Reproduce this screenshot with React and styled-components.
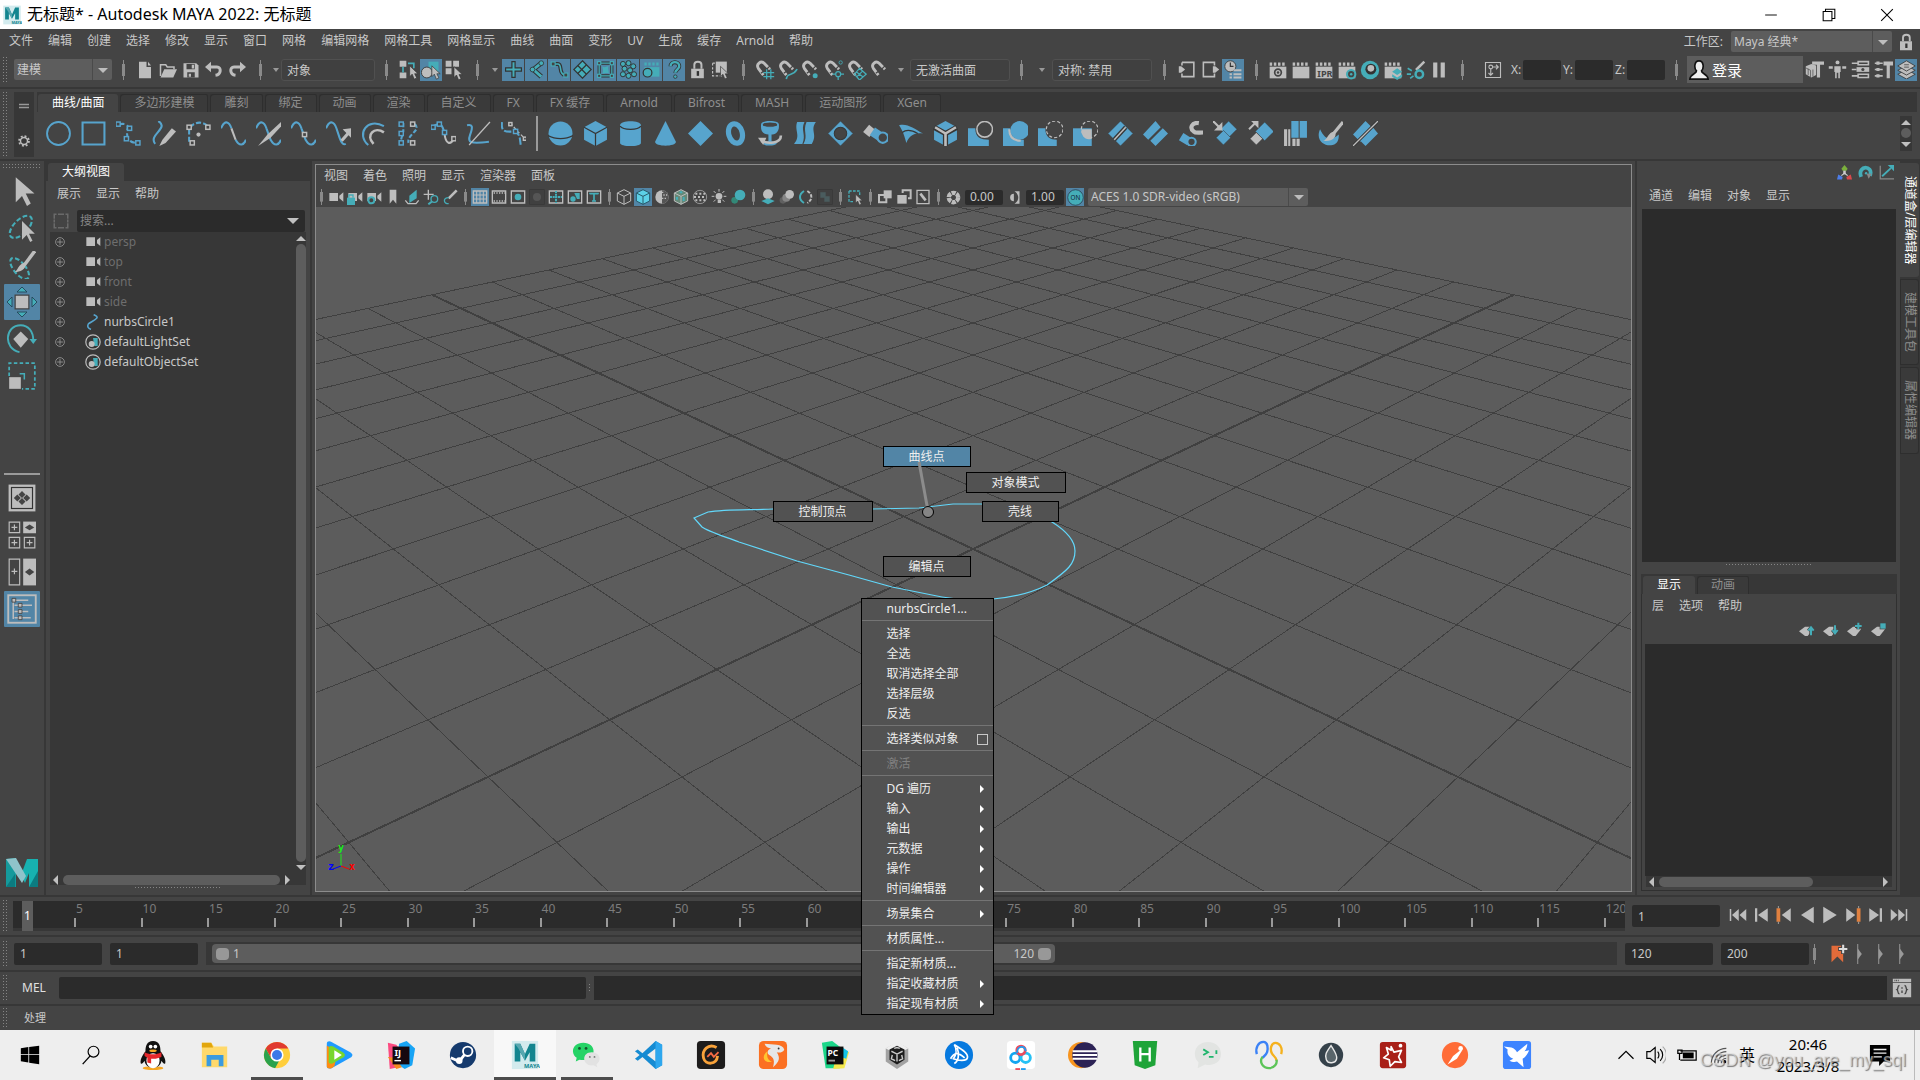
import styled, { createGlobalStyle, css } from "styled-components";

const LIGHT = "#bdbdbd";
const BLUE = "#57a4cd";
const TEAL = "#45adb8";
const DARK = "#373737";

/* ---------- icon drawing helpers ---------- */

const Svg = ({ size = 18, box = 24, children }) => (
  <svg
    width={size}
    height={size}
    viewBox={`0 0 ${box} ${box}`}
    fill="none"
    aria-hidden="true"
  >
    {children}
  </svg>
);

const Line = ({ d, c = BLUE, w = 2, dash }) => (
  <path d={d} stroke={c} strokeWidth={w} strokeDasharray={dash} />
);

const Fill = ({ d, c = BLUE }) => <path d={d} fill={c} />;

const Cv = ({ at, c = BLUE, s = 4 }) =>
  at.map(([x, y]) => (
    <rect
      key={`${x}-${y}`}
      x={x - s / 2}
      y={y - s / 2}
      width={s}
      height={s}
      fill="#444"
      stroke={c}
      strokeWidth="1.4"
    />
  ));

const Cursor = ({ x = 10, y = 8 }) => (
  <path
    transform={`translate(${x} ${y})`}
    d="M0 0v13l3-3 2.500 6 3-1.500-2.500-5h4z"
    fill={LIGHT}
    stroke="#333"
    strokeWidth=".8"
  />
);

const Clap = () => (
  <>
    <rect x="2" y="8" width="20" height="14" fill={LIGHT} />
    <path d="M2 5h20" stroke={LIGHT} strokeWidth="4" strokeDasharray="3 2" />
  </>
);

const Magnet = ({ children }) => (
  <>
    <path
      d="M10 18L4 10C1 5 7 0 11 4l7 7"
      stroke={LIGHT}
      strokeWidth="3.500"
    />
    <path d="M7 16l4-3M14 11l4-4" stroke="#444" strokeWidth="1.500" />
    {children}
  </>
);

/* ---------- data ---------- */

const mainMenus = [
  "文件", "编辑", "创建", "选择", "修改", "显示", "窗口", "网格", "编辑网格",
  "网格工具", "网格显示", "曲线", "曲面", "变形", "UV", "生成", "缓存",
  "Arnold", "帮助",
];

const shelfTabs = [
  "曲线/曲面", "多边形建模", "雕刻", "绑定", "动画", "渲染", "自定义", "FX",
  "FX 缓存", "Arnold", "Bifrost", "MASH", "运动图形", "XGen",
];

const fileIcons = {
  新建: (
    <>
      <Fill d="M4 1h10v7h6v15H4z" c={LIGHT} />
      <Fill d="M16 1l4 5h-4z" c={LIGHT} />
    </>
  ),
  打开: (
    <>
      <Line d="M2 20V5h7l2 3h9v3" c={LIGHT} />
      <Fill d="M7 11h17l-5 11H2z" c={LIGHT} />
    </>
  ),
  保存: (
    <>
      <Fill d="M2 3h17l3 3v16H2z" c={LIGHT} />
      <Fill d="M6 4h11v7H6zM7 15h10v7H7z" c="#444" />
      <Fill d="M13 5h3v5h-3zM9 17h3v4H9z" c={LIGHT} />
    </>
  ),
  撤销: (
    <>
      <Line d="M6 8h10c6 0 6 10-2 11" c={LIGHT} w={4} />
      <Fill d="M0 8l8-7v14z" c={LIGHT} />
    </>
  ),
  重做: (
    <>
      <Line d="M18 8H8c-6 0-6 10 2 11" c={LIGHT} w={4} />
      <Fill d="M24 8l-8-7v14z" c={LIGHT} />
    </>
  ),
};

const pickIcons = {
  按层级选择: (
    <>
      <Fill d="M2 1h8v7H2zM2 15h8v7H2z" c={LIGHT} />
      <Line d="M6 8v7M12 4h7v6" c={TEAL} />
      <Cursor x={14} y={7} />
    </>
  ),
  按对象选择: (
    <>
      <Fill d="M9 2h12v12H9z" c={TEAL} />
      <circle cx="7" cy="15" r="6.500" fill={LIGHT} stroke="#333" />
      <Cursor x={13} y={7} />
    </>
  ),
  按组件选择: (
    <>
      <Fill d="M2 1h7v7H2zM11 1h7v7h-7zM2 10h7v7H2z" c={LIGHT} />
      <Cursor x={12} y={8} />
    </>
  ),
};

const maskIcons = {
  控制柄: (
    <path d="M10 2h4v8h8v4h-8v8h-4v-8H2v-4h8z" fill={TEAL} stroke="#333" strokeWidth="1.500" />
  ),
  关节: (
    <>
      <path d="M18 4L8 12l10 9" stroke="#333" strokeWidth="6" />
      <path d="M18 4L8 12l10 9" stroke={TEAL} strokeWidth="3.500" />
      <circle cx="18" cy="4" r="3" fill={TEAL} stroke="#333" />
      <circle cx="7" cy="12" r="3" fill={TEAL} stroke="#333" />
    </>
  ),
  曲线: (
    <>
      <Line d="M5 5h5c6 0 0 13 9 14" c="#333" w={5} />
      <Line d="M5 5h5c6 0 0 13 9 14" c={TEAL} />
      <Cv at={[[4, 5], [20, 19]]} c={TEAL} s={5} />
    </>
  ),
  曲面: (
    <>
      <path d="M12 1l11 11-11 11L1 12z" fill={TEAL} stroke="#333" strokeWidth="1.500" />
      <Line d="M6 7l11 11M17 6L6 17" c="#333" w={1.5} />
    </>
  ),
  变形: (
    <>
      <Line d="M4 4h16v16H4z" c="#333" w={4} />
      <Line d="M4 4h16v16H4z" c={TEAL} w={1.6} />
      <Fill d="M8 8c4 3 5-1 8 0-2 4 1 6 0 9-4-2-6 1-8 0 2-4 0-6 0-9z" c={TEAL} />
      <Cv at={[[4, 4], [20, 4], [4, 20], [20, 20]]} c={TEAL} />
    </>
  ),
  动力学: [[5, 5], [12, 4], [18, 8], [7, 11], [14, 13], [5, 18], [12, 20], [19, 18]].map(
    ([x, y]) => (
      <circle key={`${x}${y}`} cx={x} cy={y} r="3.200" fill={TEAL} stroke="#333" strokeWidth="1.200" />
    )
  ),
  渲染: (
    <>
      <path d="M3 5h19" stroke={TEAL} strokeWidth="4" strokeDasharray="3 2" />
      <Fill d="M3 9h19v12H3z" c={TEAL} />
      <circle cx="7" cy="16" r="5.500" fill={TEAL} stroke="#333" strokeWidth="1.500" />
    </>
  ),
  杂项: (
    <>
      <path d="M7 8c0-7 11-7 11 0 0 4-5 4-5 8" stroke="#333" strokeWidth="5" />
      <path d="M7 8c0-7 11-7 11 0 0 4-5 4-5 8" stroke={TEAL} strokeWidth="3" />
      <circle cx="13" cy="21" r="2.200" fill={TEAL} stroke="#333" />
    </>
  ),
};

const lockIcons = {
  锁定选择: (
    <>
      <Line d="M8 11V6c0-5 9-5 9 0v5" c={LIGHT} w={2.5} />
      <Fill d="M4 11h16v12H4z" c={LIGHT} />
      <Fill d="M11 14h3v6h-3z" c="#333" />
    </>
  ),
  高亮选择: (
    <>
      <Line d="M2 4h14M2 4v16h12" c={LIGHT} w={1.5} dash="3 2" />
      <Fill d="M6 2h14v14H6z" c={LIGHT} />
      <Cursor x={12} y={8} />
    </>
  ),
};

const snapIcons = {
  捕捉到栅格: <Magnet><Line d="M10 15h13M10 20h13M14 11v12M19 11v12" c={TEAL} w={1.5} /></Magnet>,
  捕捉到曲线: <Magnet><Line d="M10 23c1-9 7-2 13-12" c={TEAL} /></Magnet>,
  捕捉到点: <Magnet><circle cx="17" cy="19" r="3" fill={TEAL} /></Magnet>,
  捕捉到投影中心: (
    <Magnet>
      <circle cx="20" cy="3" r="2" stroke={TEAL} />
      <circle cx="17" cy="17" r="3" stroke={TEAL} strokeWidth="1.500" />
      <Line d="M17 20v4M20 17h4M10 17h4" c={TEAL} w={1.5} />
    </Magnet>
  ),
  捕捉到视图平面: <Magnet><Line d="M15 10l8 7-8 7-6-7zM11 14l8 6M19 13l-7 7" c={TEAL} w={1.5} /></Magnet>,
  激活选定对象: <Magnet />,
};

const historyIcons = {
  输入: (
    <>
      <Line d="M5 3h15v18H5v-4M5 3v4" c={LIGHT} />
      <Fill d="M1 8h3l5 4-5 4H1z" c={LIGHT} />
    </>
  ),
  输出: (
    <>
      <Line d="M17 7V3H3v18h14v-4" c={LIGHT} />
      <Fill d="M15 8h3l5 4-5 4h-3z" c={LIGHT} />
    </>
  ),
  构建历史: (
    <>
      <circle cx="8" cy="8" r="7" fill={LIGHT} stroke="#333" />
      <Line d="M8 3v5h4" c="#333" w={1.5} />
      <path d="M12 13h10M12 18h10M12 22h10M7 18h3M7 22h3" stroke={LIGHT} strokeWidth="2.500" />
    </>
  ),
};

const renderIcons = {
  打开渲染视图: <><Clap /><circle cx="12" cy="15" r="4" stroke="#444" strokeWidth="2" /><circle cx="12" cy="15" r="1.500" fill="#444" /></>,
  渲染当前帧: <Clap />,
  IPR渲染: <><Clap /><text x="4" y="20" fontSize="11" fontWeight="700" fill="#444">IPR</text></>,
  渲染设置: <><Clap /><circle cx="17" cy="17" r="5" fill="#444" stroke={TEAL} strokeWidth="2.500" /><circle cx="17" cy="17" r="1.500" fill={TEAL} /></>,
  材质编辑器: <><circle cx="12" cy="12" r="11" fill={TEAL} /><circle cx="13" cy="11" r="6.500" fill="#333" /><circle cx="13" cy="10" r="4" fill={LIGHT} /></>,
  渲染设置编辑: <><Clap /><Fill d="M17 10l6 4-6 4-6-4zM11 17l6 4 6-4v3l-6 4-6-4z" c={TEAL} /></>,
  灯光编辑器: (
    <>
      <Line d="M22 2L12 12" c={LIGHT} w={3} />
      <Line d="M2 10l5 3M1 17h5M5 22l4-3" c={TEAL} />
      <circle cx="16" cy="17" r="4.500" stroke={TEAL} strokeWidth="3" />
    </>
  ),
  暂停: <Fill d="M5 3h5v18H5zM14 3h5v18h-5z" c={LIGHT} />,
};

const sidebarIcons = {
  建模工具包: (
    <>
      <Fill d="M1 8l7-3 6 2v12l-6 3-7-4z" c={LIGHT} />
      <Line d="M1 10l6 3v9M4 11v8M10 12v9" c="#555" w={1} />
      <Fill d="M9 2h15v4h-5v16h-4V6H9z" c={LIGHT} />
    </>
  ),
  人形角色: (
    <>
      <circle cx="12" cy="3" r="2.500" fill={LIGHT} />
      <Fill d="M8 8h8v7h-1v8h-2v-7h-2v7H9v-8H8zM1 8h5v3H1zM18 8h5v3h-5z" c={LIGHT} />
    </>
  ),
  属性编辑器: (
    <>
      <Line d="M1 4h8M1 20h8M1 12h6" c={LIGHT} />
      <Line d="M9 2h13v4H9zM9 18h13v4H9z" c={LIGHT} />
      <Fill d="M7 9h16v6H7z" c={LIGHT} />
      <circle cx="15" cy="12" r="2" fill="#444" />
    </>
  ),
  工具设置: (
    <>
      <Line d="M1 4h10M1 12h10M1 20h10" c={LIGHT} />
      <Fill d="M3 2h4v4H3zM3 10h4v4H3zM3 18h4v4H3zM12 2h12v5h-4v16h-4V7h-4z" c={LIGHT} />
    </>
  ),
  通道盒: (
    <>
      <path d="M12 12l11 6-11 6-11-6z" fill={LIGHT} stroke="#333" />
      <path d="M12 7l11 6-11 6-11-6z" fill={LIGHT} stroke="#333" />
      <path d="M12 1l11 6.500L12 14 1 7.500z" fill={LIGHT} stroke="#333" />
      <path d="M9 6h6M9 9h6" stroke="#444" />
    </>
  ),
};

const shelfCurveIcons = [
  <circle key="a" cx="12" cy="12" r="11" stroke={BLUE} strokeWidth="1.800" />,
  <Line key="a" d="M1.500 1.500h21v21h-21z" />,
  <><Line d="M3 3c8-1 9 1 8 5s-1 13 9 13" dash="5 3" /><Cv at={[[2, 3], [13, 7], [10, 17], [21, 21]]} /></>,
  <><Line d="M7 0c11 7-10 13-3 22" /><Fill d="M20 7l4 3-10 11-6 3 3-6z" c={LIGHT} /></>,
  <><path d="M3 20V8C7 0 16 0 21 5" stroke={BLUE} strokeWidth="2" strokeDasharray="5 2" /><Cv at={[[3, 6], [21, 6], [6, 21]]} c={LIGHT} /><circle cx="12" cy="13" r="2" fill={LIGHT} /></>,
  <><Line d="M0 7C4-2 8 1 10 7M14 18c4 7 8 5 10 0" /><Line d="M10 7l4 11" c={LIGHT} /></>,
  <><Line d="M0 7C4-2 8 1 10 7l4 11c4 7 8 5 10 0" /><Fill d="M24 1L11 13l-9 11 12-8L26 3z" c={LIGHT} /></>,
  <><Line d="M0 7C4-2 8 1 10 7l4 11c4 7 8 5 10 0" /><Cv at={[[13, 13]]} c={LIGHT} /></>,
  <><Line d="M0 7C4-2 8 1 10 7l3 9c2 6 4 7 6 6" /><Line d="M15 19l7-8" c={LIGHT} w={3} /><Fill d="M24 7v9l-8-8z" c={LIGHT} /></>,
  <><Line d="M7 23C-5 13 6-4 22 5" /><Line d="M12 22C4 13 13 5 22 11" c={LIGHT} w={2.5} /></>,
  <><Line d="M7 2v8l-3 11M18 3c7 6-8 10-6 18" dash="4 2" /><Cv at={[[5, 3], [5, 12], [5, 21]]} /><Cv at={[[16, 3], [16, 21]]} c={LIGHT} /></>,
  <><Line d="M2 5c7-4 9-2 11 7" /><Line d="M13 12c1 11 6 11 9 5" c={LIGHT} /><Cv at={[[2, 6], [8, 3], [13, 11]]} /><Cv at={[[22, 17]]} c={LIGHT} /></>,
  <><Line d="M1 4c5-1 6 1 3 9s0 9 18 7" /><Line d="M23 1L3 23" c={LIGHT} w={1.2} /></>,
  <><Line d="M1 1c-1 8 1 10 12 9 6 2 5 9 6 13" dash="7 2" /><Line d="M9 2l7 8 7 7" c={LIGHT} w={1.2} dash="3 2" /><Cv at={[[14, 10]]} /><Cv at={[[9, 3], [23, 17]]} c={LIGHT} s={3} /></>,
];

const Diamond = ({ x = 12, y = 12, r = 10, c = BLUE }) => (
  <path d={`M${x} ${y - r}l${r} ${r}-${r} ${r}-${r}-${r}z`} fill={c} stroke={DARK} strokeWidth=".5" />
);

const shelfSurfaceIcons = [
  <><circle cx="12" cy="12" r="11.500" fill={BLUE} /><Line d="M0 14c7 4 17 4 24 0" c={DARK} w={1.2} /></>,
  <><Fill d="M12 0l11 6v12l-11 6-11-6V6z" /><Line d="M1 6l11 6 11-6M12 12v12" c={DARK} w={1.2} /></>,
  <><Fill d="M2 4c0-5 20-5 20 0v17c0 4-20 4-20 0z" /><Line d="M2 5c3 4 17 4 20 0" c={DARK} w={1.2} /></>,
  <Fill key="a" d="M12 0l10 20c0 5-20 5-20 0z" />,
  <Fill key="a" d="M12 0l12 12-12 12L0 12z" />,
  <g key="a" transform="rotate(-15 12 12)"><ellipse cx="12" cy="12" rx="6.500" ry="9.500" stroke={BLUE} strokeWidth="5" /></g>,
  <><Fill d="M3 3c0-4 17-4 17 0 1 8-4 10-7 10v7h-3v-7C6 13 2 11 3 3z" /><ellipse cx="11.500" cy="3.500" rx="7.500" ry="2.500" fill="#444" stroke={BLUE} /><Fill d="M5 21c3-2 10-2 13 0 0 3-13 4-13 0z" /><Line d="M22 14c0 8-13 8-19 5" c={LIGHT} w={2.5} /><Fill d="M0 16l8 0-3 7z" c={LIGHT} /></>,
  <><Fill d="M4 1h7c-4 8 2 12-2 21H1C8 14 1 9 4 1z" /><Fill d="M13 1h9c-6 8 2 12-4 21h-8c5-8-1-12 3-21z" /></>,
  <><Diamond r={12} /><circle cx="12" cy="12" r="6" fill="#444" stroke={DARK} /></>,
  <><Line d="M3 7l6 5" c={LIGHT} w={9} /><Line d="M9 10l9 6" w={9} /><circle cx="19" cy="16" r="5" fill="#444" stroke={BLUE} strokeWidth="2" /></>,
  <><Fill d="M1 4c8-2 14 3 23 8-7-1-13 1-16 9-2-7-3-11-7-17z" /><Line d="M4 11C9 7 14 9 19 12" c={DARK} w={1.2} /></>,
  <><Fill d="M12 0l11 6v12l-11 6-11-6V6z" /><Line d="M1 6l11 6 11-6M12 12v12" c={DARK} w={5} /><Line d="M2 6l10 6 10-6M12 12v12" c={LIGHT} w={2.5} /></>,
  <><Fill d="M0 7h7c0 9 5 11 13 11v6H0z" /><circle cx="16" cy="8" r="7.500" stroke={LIGHT} strokeWidth="1.500" /></>,
  <><Fill d="M0 7h7c0 9 5 11 13 11v6H0z" /><circle cx="16" cy="9" r="9" fill={BLUE} /><Line d="M6 8c0 8 5 11 11 11" c={LIGHT} /></>,
  <><Fill d="M0 7h7c0 9 5 11 11 11v6H0z" /><circle cx="16" cy="8" r="8" stroke={LIGHT} strokeWidth="1.200" strokeDasharray="3 2" /></>,
  <><Fill d="M0 7h18v17H0z" /><Fill d="M8 8h10v9C12 19 8 15 8 8z" c={LIGHT} /><circle cx="16" cy="8" r="8" stroke={LIGHT} strokeWidth="1.200" strokeDasharray="3 2" /></>,
  <><Diamond r={12} /><Line d="M6 18L17 6" c={DARK} w={4} /><Line d="M6 18L17 6" c={LIGHT} w={1.5} /></>,
  <><Fill d="M12 0l5 6L5 18l-5-5zM19 7l5 5-12 12-5-5z" /></>,
  <><Line d="M3 15l8 5" w={8} /><circle cx="13" cy="20" r="4" fill="#444" stroke={BLUE} strokeWidth="2" /><path d="M20 2c-7-1-9 5-5 8 2 2 5 1 9 1" stroke={LIGHT} strokeWidth="4" /></>,
  <><Diamond x={15} y={8} r={8} /><Diamond x={10} y={16} r={7} /><Line d="M0 0l6 6" c={LIGHT} /><Fill d="M9 1v8H1z" c={LIGHT} /></>,
  <><Diamond x={16} y={10} r={9} /><Diamond x={8} y={17} r={6} c={LIGHT} /><Line d="M1 8l6-6" c={LIGHT} /><Fill d="M3 0h7v7z" c={LIGHT} /></>,
  <><Fill d="M8 0h7v16H8zM16 0h7v16h-7z" /><Fill d="M1 8h3v16H1zM5 8h2v16H5zM9 17h3v7H9zM13 17h3v7h-3z" c={LIGHT} /></>,
  <><Fill d="M2 8c-5 11 5 17 12 15 5-1 6-5 6-10-7 6-13 6-18-5z" /><Line d="M24 1L15 12" c={LIGHT} w={3} /><Fill d="M16 10c3 5-2 10-11 9 5-2 4-8 11-9z" c={LIGHT} /></>,
  <><Fill d="M12 0l7 7L7 20l-7-7zM19 6l5 6-12 12-5-5z" /><Line d="M24 0L0 24" c={DARK} w={3} /><Line d="M24 0L0 24" c={LIGHT} w={1.2} /></>,
];

const Cam = () => <Fill d="M2 6h13v12H2zM23 5v14l-6-5v-4z" c={LIGHT} />;
const Cube = ({ c, s = DARK }) => (
  <>
    <path d="M12 1l10 5v12l-10 5-10-5V6z" fill={c} stroke={s} strokeWidth="1.500" />
    <path d="M2 6l10 5 10-5M12 11v12" stroke={s} strokeWidth="1.500" />
  </>
);
const Frame = () => <path d="M2 3h20v18H2z" stroke={LIGHT} strokeWidth="2" />;

const viewGroups = [
  [
    <Cam key="a" />,
    <><Cam /><Fill d="M0 13h12v11H0z" c={TEAL} /><Line d="M3 13V9h6v4" c={TEAL} /></>,
    <><Cam /><circle cx="8" cy="17" r="4.500" fill="#444" stroke={TEAL} strokeWidth="3" /></>,
    <Fill key="a" d="M7 1h10v21l-5-6-5 6z" c={LIGHT} />,
    <><Fill d="M8 10L19 1v13L8 21z" c={TEAL} /><Line d="M2 17l4 5h12l4-5" c={LIGHT} /></>,
    <><Line d="M8 1v15M1 8h15" c={LIGHT} /><circle cx="17" cy="15" r="5" stroke={TEAL} strokeWidth="2" /><Line d="M13 19l-5 4" c={TEAL} w={3} /></>,
    <><Line d="M22 2L10 14" c={LIGHT} w={4} /><Line d="M10 13c-9 0-8 9 0 9" c={TEAL} /></>,
  ],
  [
    <><Frame /><Line d="M7 3v18M12 3v18M17 3v18M2 9h20M2 15h20" c={LIGHT} w={1.5} /></>,
    <><Frame /><Line d="M4 6h17M4 18h17" c={LIGHT} dash="2 2" /></>,
    <><Frame /><circle cx="12" cy="12" r="5" fill={TEAL} /></>,
    <><rect x="1" y="1" width="22" height="22" fill="#404040" stroke={DARK} /><circle cx="12" cy="12" r="6" fill="#555" /></>,
    <><Frame /><Line d="M12 3v18M3 12h18" c={TEAL} w={3} dash="3 1" /></>,
    <><Frame /><circle cx="9" cy="15" r="4" fill={TEAL} /><Fill d="M11 6h8v9h-4z" c={TEAL} /></>,
    <><Frame /><path d="M6 8V7h12v1M12 7v11M9 18h6" stroke={TEAL} strokeWidth="2.500" /></>,
  ],
  [
    <Cube key="a" c="#444" s={LIGHT} />,
    <Cube key="a" c="#5cd0e6" s="#285a6b" />,
    <><circle cx="12" cy="12" r="10" fill={LIGHT} /><path d="M12 2a10 10 0 010 20z" fill="#555" /><path d="M12 5h4M14 9h7M12 14h8" stroke={LIGHT} strokeWidth="2" strokeDasharray="2 2" /></>,
    <><Cube c="#687" s={LIGHT} /><Line d="M6 12v4M16 12v6M10 5h4" c={TEAL} w={3} /></>,
    <><circle cx="12" cy="12" r="10" fill="#444" /><circle cx="12" cy="12" r="10" stroke={LIGHT} strokeWidth="1" /><path d="M5 7h16M3 12h18M5 17h16" stroke={LIGHT} strokeWidth="3" strokeDasharray="3 3" /></>,
    <><circle cx="12" cy="11" r="5" fill={LIGHT} /><Fill d="M10 16h5v5h-5z" c={LIGHT} /><Line d="M12 0v4M1 11h4M19 11h4M4 3l3 3M20 3l-3 3M4 19l3-3M20 19l-3-3" c={LIGHT} w={1.5} /></>,
    <><circle cx="7" cy="17" r="5" fill="#387" /><circle cx="15" cy="9" r="8" fill={TEAL} /></>,
  ],
  [
    <><circle cx="12" cy="8" r="7.500" fill={LIGHT} /><Fill d="M2 18l10-4 10 4-10 5z" c={TEAL} /></>,
    <><circle cx="6" cy="17" r="5" fill="#606060" /><circle cx="11" cy="13" r="6" fill="#858585" /><circle cx="16" cy="8" r="6.500" fill={LIGHT} /></>,
    <><Line d="M9 3C1 8 1 16 9 21" c={TEAL} w={3} /><Line d="M14 3c8 5 8 13 0 18" c={LIGHT} w={3} dash="5 2" /></>,
    <><rect x="1" y="1" width="22" height="22" fill="#404040" stroke={DARK} /><Fill d="M5 5h8v8H5zM11 11h8v8h-8z" c="#4a5c5e" /></>,
  ],
  [<><Line d="M3 3h16v8M3 3v16h8" c={TEAL} dash="4 2" /><Cursor x={13} y={8} /></>],
  [
    <><Line d="M3 9h11v11H3z" c={LIGHT} w={3} /><Fill d="M10 2h12v12H10z" c={LIGHT} /></>,
    <><Fill d="M2 9h14v13H2z" c={LIGHT} /><Line d="M10 6V2h12v12h-4" c={LIGHT} w={3} /></>,
    <><Line d="M3 2h18v20H3z" c={LIGHT} /><Line d="M8 7l8 10" c={LIGHT} w={4} /></>,
  ],
];

const outlinerRows = [
  ["persp", "cam"],
  ["top", "cam"],
  ["front", "cam"],
  ["side", "cam"],
  ["nurbsCircle1", "curve"],
  ["defaultLightSet", "set"],
  ["defaultObjectSet", "set"],
];

const rowArt = {
  cam: <Fill d="M2 5h13v13H2zM23 5v13l-5-4V9z" c={LIGHT} />,
  curve: <Line d="M13 1c14 5-5 10-8 14-2 4 0 7 4 8" w={2.4} />,
  set: (
    <>
      <circle cx="12" cy="12" r="10.800" stroke={LIGHT} strokeWidth="1.800" />
      <Fill d="M12 6h7v12h-5z" c={TEAL} />
      <circle cx="10" cy="15" r="4.500" fill={LIGHT} />
    </>
  ),
};

const contextItems = [
  { label: "nurbsCircle1..." },
  null,
  { label: "选择" },
  { label: "全选" },
  { label: "取消选择全部" },
  { label: "选择层级" },
  { label: "反选" },
  null,
  { label: "选择类似对象", option: true },
  null,
  { label: "激活", disabled: true },
  null,
  { label: "DG 遍历", sub: true },
  { label: "输入", sub: true },
  { label: "输出", sub: true },
  { label: "元数据", sub: true },
  { label: "操作", sub: true },
  { label: "时间编辑器", sub: true },
  null,
  { label: "场景集合", sub: true },
  null,
  { label: "材质属性..." },
  null,
  { label: "指定新材质..." },
  { label: "指定收藏材质", sub: true },
  { label: "指定现有材质", sub: true },
];

// offsets are measured from the middle of the viewport
const markingItems = [
  { label: "曲线点", x: -91, y: -103, w: 88, on: true },
  { label: "对象模式", x: -8, y: -77, w: 100 },
  { label: "控制顶点", x: -201, y: -48, w: 100 },
  { label: "壳线", x: 8, y: -48, w: 77 },
  { label: "编辑点", x: -91, y: 7, w: 88 },
];

const frames = Array.from({ length: 24 }, (_, i) => (i + 1) * 5);

const playIcons = {
  转到开头: <Fill d="M1 4h2v16H1zM13 4v16L4 12zM23 4v16l-9-8z" c={LIGHT} />,
  后退一帧: <Fill d="M4 3h3v18H4zM21 3v18L8 12z" c={LIGHT} />,
  后退一关键帧: <><Fill d="M2 3h5v18H2z" c="#e0803f" /><Line d="M4.500 0v3M4.500 21v3" c={LIGHT} w={1} /><Fill d="M21 3v18L9 12z" c={LIGHT} /></>,
  向后播放: <Fill d="M21 1v22L4 12z" c={LIGHT} />,
  向前播放: <Fill d="M3 1v22l18-11z" c={LIGHT} />,
  前进一关键帧: <><Fill d="M17 3h5v18h-5z" c="#e0803f" /><Line d="M19.500 0v3M19.500 21v3" c={LIGHT} w={1} /><Fill d="M3 3v18l12-9z" c={LIGHT} /></>,
  前进一帧: <Fill d="M17 3h3v18h-3zM3 3v18l13-9z" c={LIGHT} />,
  转到结尾: <Fill d="M21 4h2v16h-2zM1 4v16l9-8zM11 4v16l9-8z" c={LIGHT} />,
};

/* ---------- perspective floor ---------- */

const CELLS = 12;

const project = (i, j) => {
  const depth = (i + j) / 2;
  const w = 1 + 0.1012 * depth;
  return [(144.9 * (i - j)) / 2 / w, (-68.1 * depth) / w];
};

const gridLines = [];
for (let i = -CELLS; i <= CELLS; i++) {
  const near = Math.max(-CELLS, -15.8 - i);
  const a = project(i, near);
  const b = project(i, CELLS);
  gridLines.push({ key: `u${i}`, a, b, axis: i === 0 });
  gridLines.push({
    key: `v${i}`,
    a: [-a[0], a[1]],
    b: [-b[0], b[1]],
    axis: i === 0,
  });
}

const Scene = () => (
  <SceneSvg viewBox="-657 -342 1315 684" preserveAspectRatio="xMidYMid slice">
    <g stroke="#404040" shapeRendering="crispEdges">
      {gridLines.map(({ key, a, b, axis }) => (
        <line
          key={key}
          x1={a[0]}
          y1={a[1]}
          x2={b[0]}
          y2={b[1]}
          strokeWidth={axis ? 2 : 1}
        />
      ))}
    </g>
    <path
      d="M-279-31L-265-37C-248-40-225-39-200-40L-101-40-54-41-20-45 8-45C40-44 63-40 79-27 95-17 102-8 102 2 102 15 95 21 74 36 60 43 45 48 20 50-5 52-20 50-31 48L-81 38-124 26-176 12-234-7C-250-13-266-18-271-22z"
      fill="none"
      stroke="#62d8fb"
      strokeWidth="1.200"
    />
  </SceneSvg>
);

/* ---------- taskbar art, 32 unit box ---------- */

const taskApps = [
  ["QQ", <><ellipse cx="16" cy="30" rx="11" ry="2" fill="#f5a623" /><path d="M16 1c-7 0-8 6-8 11-4 5-6 10-5 13 1 1 3-1 4-3 1 10 17 10 18 0 1 2 3 4 4 3 1-3-1-8-5-13 0-5-1-11-8-11z" fill="#111" /><ellipse cx="16" cy="22" rx="7" ry="8" fill="#fff" /><path d="M7 13c6 3 12 3 18 0v5c-5 2-8 2-11 2v5l-4-1v-5l-3-2z" fill="#e5282c" /><circle cx="13.500" cy="7" r="2" fill="#fff" /><circle cx="18.500" cy="7" r="2" fill="#fff" /><ellipse cx="16" cy="11.500" rx="4" ry="1.400" fill="#f5a623" /></>],
  ["文件资源管理器", <><path d="M2 3h10l3 4h14v22H2z" fill="#ffd96b" /><path d="M2 3h10l2 5H2z" fill="#e2a60c" /><path d="M7 16h18v12h-5v-7h-8v7H7z" fill="#3a9be0" /></>],
  ["Chrome", <><circle cx="16" cy="16" r="14" fill="#ffce3c" /><path d="M16 2a14 14 0 00-12 7l6 11 6-11h12A14 14 0 0016 2z" fill="#e03a30" /><path d="M4 9a14 14 0 0010 21l6-11-10 1z" fill="#2ba24c" /><circle cx="16" cy="16" r="7" fill="#fff" /><circle cx="16" cy="16" r="5.300" fill="#3b78e7" /></>, "running"],
  ["腾讯视频", <><path d="M3 4c0-3 3-3 5-2l20 11c3 2 3 4 0 6L8 30c-3 1-5 0-5-2z" fill="#1f9bff" /><path d="M3 6l12 6-4 16-3 2c-3 1-5 0-5-2z" fill="#ff8b12" /><path d="M5 9c0-3 3-3 5-2l10 6c3 2 3 4 0 6l-11 6c-2 1-4 0-4-2z" fill="#78d62c" /><path d="M11 11l8 5-8 5z" fill="#fff" /></>],
  ["IntelliJ IDEA", <><path d="M2 3l9 2 6 8-4 16-9 2z" fill="#fc4a80" /><path d="M14 4l8-3 9 8-3 18-8 4-9-6z" fill="#18a4f5" /><path d="M2 18l8 1 7 10-6 2z" fill="#f68b1f" /><rect x="7" y="7" width="18" height="19" fill="#16080f" /><text x="9" y="17" fontSize="10" fontWeight="700" fill="#fff">IJ</text><path d="M9 22h7" stroke="#fff" strokeWidth="1.500" /></>],
  ["Steam", <><circle cx="16" cy="16" r="14" fill="#153a6d" /><path d="M3 19l9 4 9-12" stroke="#fff" strokeWidth="3" /><circle cx="21" cy="12" r="5" fill="#153a6d" stroke="#fff" strokeWidth="2" /><circle cx="12" cy="22" r="3.500" fill="#fff" /></>],
  ["Maya", <><rect x="2" y="1" width="28" height="30" fill="#d3ebee" /><path d="M5 4h6l5 11 5-11h6v19h-6V13l-5 9-5-9v10H5z" fill="#12858f" /><path d="M5 4h6l5 11v7L9 9z" fill="#57a7b0" /><text x="15" y="30" fontSize="6" fontWeight="700" fill="#12858f">MAYA</text></>, "active"],
  ["微信", <><path d="M12 3C5 3 1 7 1 12c0 3 2 6 4 7l-1 4 4-2c9 2 15-3 15-9 0-5-4-9-11-9z" fill="#25d366" /><path d="M21 13c-5 0-8 3-8 7s4 8 10 7l4 2-1-3c6-4 4-13-5-13z" fill="#e2e2e2" /><circle cx="8" cy="9" r="1.500" fill="#16532e" /><circle cx="15" cy="9" r="1.500" fill="#16532e" /><circle cx="19" cy="18" r="1" fill="#777" /><circle cx="24" cy="18" r="1" fill="#777" /></>, "running"],
  ["VS Code", <><path d="M23 1l7 4v22l-7 4L9 18l-5 4-3-2 5-4-5-4 3-2 5 4zM23 9l-9 7 9 7z" fill="#168bd2" /><path d="M23 1l7 4v22l-7 4z" fill="#2da7ee" /></>],
  ["Wallpaper", <><rect x="1" y="1" width="30" height="30" rx="4" fill="#1d1c1c" /><path d="M22 8c-9-5-16 3-14 11 2 8 14 8 15-2" stroke="#f8a23a" strokeWidth="3" /><path d="M12 18l4-4 3 4 5-5" stroke="#f66b43" strokeWidth="2" /></>],
  ["Navicat", <><rect x="1" y="1" width="30" height="30" rx="5" fill="#fb7022" /><path d="M7 4c9 1 19 0 21 6-1 3-5 4-8 3 4 6 3 10-4 16 2-7 1-10-4-13-3-2-2-6 2-7-3 0-6-2-7-5z" fill="#e6e6e6" /><path d="M10 12c-7 5-4 14 5 11-4-1-6-4-5-11z" fill="#ffc52e" /><circle cx="22" cy="9" r="1" fill="#333" /></>],
  ["PyCharm", <><path d="M2 3l11-2 12 9-4 20H6z" fill="#1cd789" /><path d="M20 7l11 6-5 17-12 1z" fill="#f5e94e" /><path d="M24 8l6 4-2 8-6-2z" fill="#14c4e8" /><rect x="7" y="7" width="18" height="19" fill="#0d0d0d" /><text x="8" y="17" fontSize="9" fontWeight="700" fill="#fff">PC</text><path d="M9 22h7" stroke="#999" strokeWidth="2" /></>],
  ["Unity", <><path d="M16 2l12 7v14l-12 8-12-8V9z" fill="#a2a2a2" /><path d="M16 1l12 8-12 6L4 9z" fill="#eee" /><path d="M16 6l8 4v11l-8 5-8-5V10z" fill="#1c1c1c" /><path d="M10 12l6 3 6-3M16 15v8M11 16l-1 4 4 2M21 16l1 4-4 2M13 9l3-1 3 1" stroke="#c9c9c9" strokeWidth="1.500" /></>],
  ["蓝鸟", <><circle cx="16" cy="16" r="15" fill="#0679df" /><path d="M11 5c8 5 15 9 14 14-1 4-10 3-15 1 3-4 4-10 1-15zM7 20c4-7 8-7 15-1M11 25c4-2 6-9 3-17" stroke="#fff" strokeWidth="1.800" /></>],
  ["百度网盘", <><rect x="1" y="1" width="30" height="30" rx="4" fill="#fff" /><circle cx="10" cy="19" r="5" stroke="#13a5f0" strokeWidth="3" /><circle cx="21" cy="19" r="5" stroke="#25c1f5" strokeWidth="3" /><circle cx="16" cy="11" r="4.500" stroke="#ee4b5c" strokeWidth="3" /><path d="M12 14c-1-8 9-9 9-2" stroke="#219ff2" strokeWidth="2" /><path d="M10 31h5" stroke="#ee4b5c" strokeWidth="2" /><path d="M16 31h5" stroke="#219ff2" strokeWidth="2" /></>],
  ["Eclipse", <><circle cx="14" cy="16" r="14" fill="#f7941e" /><circle cx="18" cy="16" r="13.500" fill="#2c2255" /><path d="M5 12h26M5 16h26M5 20h26" stroke="#fff" strokeWidth="2" /></>],
  ["HBuilder", <><path d="M3 1h26l-2 26-11 4-11-4z" fill="#1ea438" /><path d="M11 8v15M21 8v15M11 15h10" stroke="#fff" strokeWidth="2.500" /></>],
  ["终端", <><path d="M3 15C3-2 31-2 31 15c0 11-12 13-17 11l-8 4 1-6c-2-2-4-5-4-9z" fill="#e2e4e2" /><path d="M12 10l5 3-5 3M18 18h5M26 11v4" stroke="#20b56d" strokeWidth="2" /></>],
  ["Mongo", <><path d="M3 15C1 8 5 2 10 2s5 7 4 11c-1 3-3 4-5 6" stroke="#3b82f6" strokeWidth="2.500" /><path d="M29 15c2-7-2-12-6-12-5 0-6 7-4 11 1 3 5 4 5 8" stroke="#f5b11d" strokeWidth="2.500" /><path d="M9 18c-4 6 1 12 7 12s9-5 8-9" stroke="#5cc458" strokeWidth="2.500" /></>],
  ["水滴", <><circle cx="16" cy="16" r="13" fill="#35414a" /><path d="M16 6c-5 7-7 10-5 15 2 5 10 4 11-1 1-4-3-9-6-14z" fill="#59656b" stroke="#e8e8e8" strokeWidth="1.500" /></>],
  ["红星", <><rect x="2" y="2" width="28" height="28" rx="3" fill="#a92018" /><path d="M14 7l3 6 8-2-3 7 3 6-7-1-5 5-1-7-6-2 5-4-2-7 5 3z" stroke="#fff" strokeWidth="1.800" strokeLinejoin="round" /><circle cx="24" cy="6" r="2" fill="#fff" /></>],
  ["Postman", <><circle cx="16" cy="16" r="14" fill="#ff6c37" /><path d="M24 9L14 17l-6 9 10-6 5-8z" fill="#fff" /><circle cx="22" cy="9" r="2.500" fill="#fff" /></>],
  ["迅雷", <><rect x="1" y="1" width="30" height="30" rx="3" fill="#3d84ff" /><path d="M2 7l8 1c3 1 5 3 6 5L27 4c0 3-1 6-3 8l5-1c-2 5-4 7-7 9l1 9-7-6c-3 1-6 0-8-1l4-2C7 18 5 15 6 10z" fill="#fff" /></>],
];

/* ---------- app ---------- */

const Buttons = ({ icons, active = [], size = 19 }) =>
  Object.entries(icons).map(([name, art], i) => (
    <ToolButton key={name} aria-label={name} $on={active.includes(i)}>
      <Svg size={size}>{art}</Svg>
    </ToolButton>
  ));

const Picker = ({ label, value, grow }) => (
  <PickerBox $grow={grow}>
    <select aria-label={label} defaultValue={value}>
      <option>{value}</option>
    </select>
    <PickerArrow />
  </PickerBox>
);

const Menus = ({ items, ...rest }) => (
  <MenuBar {...rest}>
    {items.map((m) => (
      <button key={m}>{m}</button>
    ))}
  </MenuBar>
);

export default function App() {
  return (
    <Shell>
      <Global />
      <TitleBar>
        <Svg size={20} box={32}>{taskApps[6][1]}</Svg>
        <h1>无标题* - Autodesk MAYA 2022: 无标题</h1>
        <WindowButton aria-label="最小化"><Svg size={14}><Line d="M2 12h20" c="#000" w={1.6} /></Svg></WindowButton>
        <WindowButton aria-label="还原"><Svg size={14}><Line d="M2 6h15v16H2zM6 6V2h16v16h-5" c="#000" w={1.8} /></Svg></WindowButton>
        <WindowButton aria-label="关闭"><Svg size={14}><Line d="M2 2l20 20M22 2L2 22" c="#000" w={1.8} /></Svg></WindowButton>
      </TitleBar>

      <TopMenuRow>
        <Menus items={mainMenus} />
        <Workspace>
          <label>工作区:</label>
          <Picker label="工作区" value="Maya 经典*" grow={161} />
          <ToolButton aria-label="锁定工作区"><Svg size={18}>{lockIcons.锁定选择}</Svg></ToolButton>
        </Workspace>
      </TopMenuRow>

      <StatusLine>
        <Grip />
        <Picker label="菜单集" value="建模" grow={98} />
        <Sep />
        <Buttons icons={fileIcons} size={18} />
        <Sep />
        <DropArrow $w={10} />
        <StatusField aria-label="选择遮罩" defaultValue="对象" $w={94} />
        <Sep />
        <Buttons icons={pickIcons} active={[1]} size={20} />
        <Sep />
        <DropArrow $w={14} />
        <Buttons icons={maskIcons} active={[0, 1, 2, 3, 4, 5, 6, 7]} />
        <Buttons icons={lockIcons} />
        <Sep />
        <Buttons icons={snapIcons} size={20} />
        <DropArrow $w={18} />
        <StatusField aria-label="激活曲面" defaultValue="无激活曲面" $w={100} />
        <Sep />
        <DropArrow $w={20} />
        <StatusField aria-label="对称" defaultValue="对称: 禁用" $w={100} />
        <Sep $w={24} />
        <Buttons icons={historyIcons} active={[2]} />
        <Sep />
        <Buttons icons={renderIcons} size={20} />
        <Sep />
        <StatusRight>
          <ToolButton aria-label="输入方式">
            <Svg size={18}>
              <Line d="M2 2h20v20H2z" c={LIGHT} w={1.5} />
              <circle cx="9" cy="8" r="2.500" stroke={LIGHT} strokeWidth="1.500" />
              <Line d="M9 10v9M12 8h7M6 16l3 3 3-3M16 5l3 3-3 3" c={LIGHT} w={1.5} />
            </Svg>
          </ToolButton>
          {["X", "Y", "Z"].map((axis) => (
            <Coord key={axis}>
              {axis}:<input />
            </Coord>
          ))}
          <Sep />
          <LoginButton>
            <Svg size={20}>
              <path d="M12 1c6 0 6 9 3 12 0 4 7 3 8 10H1c1-7 8-6 8-10C6 10 6 1 12 1z" fill="#eee" stroke="#111" strokeWidth="2" />
            </Svg>
            登录
          </LoginButton>
          <Buttons icons={sidebarIcons} active={[4]} />
        </StatusRight>
      </StatusLine>

      <Shelf>
        <Grip />
        <ShelfSide>
          <Svg size={12}><Line d="M2 9h20M2 15h20" c="#999" w={3} /></Svg>
          <Svg size={14}><circle cx="12" cy="12" r="6" stroke={LIGHT} strokeWidth="2.500" /><circle cx="12" cy="12" r="8.500" stroke={LIGHT} strokeWidth="3" strokeDasharray="3.300 3.370" /></Svg>
        </ShelfSide>
        <ShelfBody>
          <TabStrip>
            {shelfTabs.map((t, i) => (
              <Tab key={t} $on={i === 0}>{t}</Tab>
            ))}
          </TabStrip>
          <ShelfIcons>
            {shelfCurveIcons.map((art, i) => (
              <ShelfButton key={i} aria-label={`曲线工具 ${i + 1}`}><Svg size={25}>{art}</Svg></ShelfButton>
            ))}
            <ShelfRule />
            {shelfSurfaceIcons.map((art, i) => (
              <ShelfButton key={i} aria-label={`曲面工具 ${i + 1}`}><Svg size={25}>{art}</Svg></ShelfButton>
            ))}
            <ShelfScroll>
              <Triangle $dir="up" />
              <i />
              <Triangle $dir="down" />
            </ShelfScroll>
          </ShelfIcons>
        </ShelfBody>
      </Shelf>

      <Main>
        <Toolbox />
        <Outliner />
        <Viewport />
        <ChannelBox />
        <SideTabs>
          <button>通道盒/层编辑器</button>
          <button>建模工具包</button>
          <button>属性编辑器</button>
        </SideTabs>
      </Main>

      <TimeRow>
        <Grip />
        <TimeSlider>
          <Ruler>
            {frames.map((f) => (
              <li key={f}>{f}</li>
            ))}
          </Ruler>
          <Playhead>1</Playhead>
        </TimeSlider>
        <NumberField aria-label="当前帧" defaultValue="1" />
        <Playback>
          <Buttons icons={playIcons} size={18} />
        </Playback>
      </TimeRow>

      <RangeRow>
        <Grip />
        <NumberField aria-label="动画开始" defaultValue="1" />
        <NumberField aria-label="播放开始" defaultValue="1" />
        <RangeTrack>
          <RangeBar>
            <Handle />1<span>120</span>
            <Handle />
          </RangeBar>
        </RangeTrack>
        <NumberField aria-label="播放结束" defaultValue="120" />
        <NumberField aria-label="动画结束" defaultValue="200" />
        <RangeTools>
          <Sep $w={10} />
          <ToolButton aria-label="添加书签">
            <Svg size={20}>
              <Fill d="M3 2h14v20l-7-7-7 7z" c="#e26b3a" />
              <Line d="M17 0v12M11 6h12" c="#444" w={5} />
              <Line d="M17 1v10M12 6h10" c="#ddd" w={2.5} />
            </Svg>
          </ToolButton>
          {[1, 2, 3].map((n) => (
            <Svg key={n} size={20}><Line d="M8 0v24" c="#888" w={1.5} /><Fill d="M8 5l5 7-5 7z" c="#999" /></Svg>
          ))}
        </RangeTools>
      </RangeRow>

      <CommandRow>
        <Grip />
        <label htmlFor="mel">MEL</label>
        <CommandInput id="mel" />
        <Grip $thin />
        <CommandOutput aria-label="命令结果" readOnly />
        <ToolButton aria-label="脚本编辑器">
          <Svg size={20}>
            <Fill d="M1 1h22v4H1zM1 6h22v17H1z" c={LIGHT} />
            <Line d="M3 3h6" c="#444" dash="1 1" />
            <Line d="M9 9c-3 0-1 4-3 5 2 1 0 5 3 5M15 9c3 0 1 4 3 5-2 1 0 5-3 5M12 11v2M12 15v3" c="#444" w={1.6} />
          </Svg>
        </ToolButton>
      </CommandRow>

      <HelpRow>
        <Grip />
        处理
      </HelpRow>

      <Taskbar />
    </Shell>
  );
}

const Toolbox = () => (
  <ToolColumn>
    <Grip $flat />
    <BigTool aria-label="选择"><Svg size={30}><Fill d="M7 1v20l5-5 4 8 3-2-4-8h7z" c={LIGHT} /></Svg></BigTool>
    <BigTool aria-label="套索"><Svg size={28}><ellipse cx="11" cy="11" rx="6" ry="12" transform="rotate(45 11 11)" stroke={TEAL} strokeWidth="1.800" strokeDasharray="4 2" /><Fill d="M12 6v16l4-4 3 6 2-1-3-6h5z" c={LIGHT} /></Svg></BigTool>
    <BigTool aria-label="绘制选择"><Svg size={28}><ellipse cx="10" cy="15" rx="5" ry="11" transform="rotate(-40 10 15)" stroke={TEAL} strokeWidth="1.800" strokeDasharray="4 2" /><Line d="M23 0L14 12" c={LIGHT} w={3} /><Fill d="M15 10c1 6-5 8-9 8 3-3 4-8 9-8z" c={LIGHT} /></Svg></BigTool>
    <BigTool aria-label="移动" $on><Svg size={30}><rect x="6.500" y="6.500" width="11" height="11" fill={LIGHT} stroke="#444" /><path d="M12 0l4 4H8zM12 24l4-4H8zM0 12l4-4v8zM24 12l-4-4v8z" fill={TEAL} stroke="#245" strokeWidth=".7" /></Svg></BigTool>
    <BigTool aria-label="旋转"><Svg size={30}><path d="M10 22.500C-3 20-2 1 11 1c6 0 10 5 10 12" stroke={TEAL} strokeWidth="1.500" /><Fill d="M18 12h6l-3 4z" c={TEAL} /><Fill d="M11 6l6 6-6 7-6-7z" c={LIGHT} /></Svg></BigTool>
    <BigTool aria-label="缩放"><Svg size={28}><Line d="M1 12V1h22v22H12" c={TEAL} w={1.5} dash="3 2" /><Fill d="M1 13h10v10H1z" c={LIGHT} /><Line d="M10 10h4v5" c={TEAL} w={1.3} /></Svg></BigTool>
    <ToolRule />
    <BigTool aria-label="单个视图"><Svg size={28}><rect x=".5" y=".5" width="23" height="23" fill={LIGHT} /><rect x="3" y="3" width="18" height="18" stroke="#333" /><path d="M12 6l3 3-3 3-3-3zM12 12l3 3-3 3-3-3zM8 9l3 3-3 3-3-3zM16 9l3 3-3 3-3-3z" fill="#444" /></Svg></BigTool>
    <BigTool aria-label="四视图"><Svg size={28}><path d="M1 1h9v9H1zM1 14h9v9H1zM14 14h9v9h-9zM5.500 3v5M3 5.500h5M5.500 16v5M3 18.500h5M18.500 16v5M16 18.500h5" stroke={LIGHT} /><Fill d="M13 .5h11v10H13z" c={LIGHT} /><Fill d="M18.500 3l4 2.500-4 2.500-4-2.500z" c="#444" /></Svg></BigTool>
    <BigTool aria-label="双视图"><Svg size={28}><path d="M1 1h9v22H1zM5.500 9v5M3 11.500h5" stroke={LIGHT} /><Fill d="M13 .5h11v23H13z" c={LIGHT} /><Fill d="M18.500 9l4 3-4 3-4-3z" c="#444" /></Svg></BigTool>
    <BigTool aria-label="大纲视图" $on><Svg size={30}><rect x="1" y="1" width="22" height="22" stroke={LIGHT} strokeWidth="1.500" /><path d="M5 5v15M6 5h11M6 9h14M6 14h11M6 19h13" stroke={LIGHT} strokeWidth="1.200" /><path d="M4 3.500h3v3H4zM9 7.500h3v3H9zM9 12.500h3v3H9zM9 17.500h3v3H9z" fill={LIGHT} stroke="#444" strokeWidth=".7" /></Svg></BigTool>
    <MayaMark>
      <svg width="32" height="30" viewBox="0 0 32 30" aria-hidden="true">
        <path d="M0 1l10-1v29H0z" fill="#159a9c" />
        <path d="M32 1H21L15 17l4 8 4-10v14h9z" fill="#17b1b0" />
        <path d="M0 1l10-1 10 18-4 7z" fill="#8fc3ca" />
        <path d="M0 29l9-13v13zM23 29l9-16v16z" fill="#0c7b80" />
      </svg>
    </MayaMark>
  </ToolColumn>
);

const Outliner = () => (
  <OutlinerPanel>
    <TabStrip $inset>
      <Tab $on>大纲视图</Tab>
    </TabStrip>
    <Menus items={["展示", "显示", "帮助"]} $left={11} $h={26} />
    <SearchRow>
      <Svg size={18}><path d="M6 3H3v6M3 15v6h3M18 3h3v6M21 15v6h-3M8 3h8M8 21h8M3 10v4M21 10v4" stroke="#6a6a6a" strokeWidth="2" /></Svg>
      <SearchBox>
        <input aria-label="搜索" placeholder="搜索..." />
        <Triangle $dir="down" $big />
      </SearchBox>
    </SearchRow>
    <TreeArea>
      <Tree>
        {outlinerRows.map(([name, kind]) => (
          <TreeRow key={name} $dim={kind === "cam"}>
            <Svg size={10}><circle cx="12" cy="12" r="10.500" stroke="#999" strokeWidth="2" /><Line d="M12 5v14M5 12h14" c="#999" w={2} /></Svg>
            <Svg size={16}>{rowArt[kind]}</Svg>
            {name}
          </TreeRow>
        ))}
      </Tree>
      <VScroll>
        <Triangle $dir="up" />
        <i />
        <Triangle $dir="down" />
      </VScroll>
    </TreeArea>
    <HScroll $right={16}>
      <Triangle $dir="left" />
      <b><i /></b>
      <Triangle $dir="right" />
    </HScroll>
    <Dots />
  </OutlinerPanel>
);

const Viewport = () => (
  <ViewportWrap>
    <ViewportFrame>
      <Menus
        items={["视图", "着色", "照明", "显示", "渲染器", "面板"]}
        $left={8}
        $h={22}
      />
      <ViewToolbar>
        {viewGroups.map((group, g) => (
          <ViewGroup key={g}>
            <Sep $w={11} />
            {group.map((art, i) => (
              <SmallTool
                key={i}
                aria-label={`视图工具 ${g + 1}-${i + 1}`}
                $on={(g === 1 && i === 0) || (g === 2 && i === 1)}
              >
                <Svg size={16}>{art}</Svg>
              </SmallTool>
            ))}
          </ViewGroup>
        ))}
        <Sep $w={11} />
        <SmallTool aria-label="曝光"><Svg size={15}><circle cx="12" cy="12" r="7.500" stroke={LIGHT} strokeWidth="7" strokeDasharray="6.500 1.350" /></Svg></SmallTool>
        <ViewNumber aria-label="曝光值" defaultValue="0.00" />
        <SmallTool aria-label="伽马"><Svg size={15}><Fill d="M12 2h8v20h-8c8-5 8-15 0-20z" c={LIGHT} /><path d="M11 6a6 6 0 000 12z" fill={LIGHT} /></Svg></SmallTool>
        <ViewNumber aria-label="伽马值" defaultValue="1.00" />
        <SmallTool aria-label="视图变换" $on><Svg size={17}><circle cx="12" cy="12" r="11" fill={TEAL} stroke="#234" /><text x="5" y="15" fontSize="9" fill="#123">ON</text></Svg></SmallTool>
        <Picker label="颜色空间" value="ACES 1.0 SDR-video (sRGB)" grow={220} />
      </ViewToolbar>
      <Stage>
        <Scene />
        <AxisMark>
          <svg width="36" height="32" viewBox="0 0 36 32" fill="none" aria-hidden="true">
            <path d="M17 24V12" stroke="#1bea1b" />
            <path d="M17 24l8 3" stroke="#f00" />
            <path d="M17 24l-8 3" stroke="#00f" />
            <text x="14" y="9" fontSize="10" fontWeight="700" fill="#1bea1b">y</text>
            <text x="25" y="28" fontSize="10" fontWeight="700" fill="#f00">x</text>
            <text x="4" y="28" fontSize="10" fontWeight="700" fill="#00f">z</text>
          </svg>
        </AxisMark>
        <Center>
          {markingItems.map(({ label, x, y, w, on }) => (
            <MarkingItem key={label} $x={x} $y={y} $w={w} $on={on}>
              {label}
            </MarkingItem>
          ))}
          <MarkingStroke>
            <svg width="20" height="60" viewBox="0 0 20 60" fill="none" aria-hidden="true">
              <path d="M3 3l9 49" stroke="#8c8c8c" strokeWidth="3" />
              <circle cx="12" cy="53" r="5.500" fill="#858585" stroke="#000" />
            </svg>
          </MarkingStroke>
          <ContextMenu role="menu">
            {contextItems.map((item, i) =>
              item ? (
                <ContextItem key={i}>
                  <button role="menuitem" disabled={item.disabled}>{item.label}</button>
                  {item.option && <input type="checkbox" aria-label="选择类似对象选项" />}
                  {item.sub && <Triangle $dir="right" />}
                </ContextItem>
              ) : (
                <ContextRule key={i} role="separator" />
              )
            )}
          </ContextMenu>
        </Center>
      </Stage>
    </ViewportFrame>
  </ViewportWrap>
);

const ChannelBox = () => (
  <ChannelPanel>
    <ChannelIcons>
      <Svg size={15}><Fill d="M12 0l5 6-2 3H9L7 6z" c="#7bb03c" /><Fill d="M10 9h4v6h-4z" c="#ccc" /><Fill d="M0 23l2-8 7 4-1 4z" c="#4c7de8" /><Fill d="M24 23l-2-8-7 4 1 4z" c="#d8494b" /><Line d="M12 13l-5 4M12 13l5 4" c="#ccc" /></Svg>
      <Svg size={15}><path d="M5 19C1 9 8 4 12 4s11 4 7 13" stroke={TEAL} strokeWidth="6" /><circle cx="13" cy="13" r="2" fill={TEAL} /><Fill d="M14 14h8l-5 8z" c="#888" /></Svg>
      <Svg size={15}><Line d="M2 1v21h22" c="#888" /><Line d="M5 18L19 5" c={TEAL} w={3} /><Fill d="M14 0h10v10z" c={TEAL} /></Svg>
    </ChannelIcons>
    <Menus items={["通道", "编辑", "对象", "显示"]} $left={12} $h={27} />
    <ChannelList />
    <Dots />
    <LayerPanel>
      <TabStrip $inset>
        <Tab $on>显示</Tab>
        <Tab>动画</Tab>
      </TabStrip>
      <LayerBody>
        <Menus items={["层", "选项", "帮助"]} $left={10} $h={24} />
        <LayerIcons>
          {["M18 9v11M14 13l4-5 4 5", "M18 5v11M14 12l4 5 4-5", "M17 1v10M12 6h10", "M16 4h4v4h-4z"].map((d, i) => (
            <Svg key={d} size={16}><Fill d="M0 14l9-7h9l3 4-8 10H9z" c={LIGHT} /><Line d={d} c="#444" w={i < 2 ? 5 : 6} /><Line d={d} c={TEAL} w={i < 3 ? 3 : 4} /></Svg>
          ))}
        </LayerIcons>
        <LayerList />
        <HScroll $end={85}>
          <Triangle $dir="left" />
          <b><i /></b>
          <Triangle $dir="right" />
        </HScroll>
      </LayerBody>
    </LayerPanel>
  </ChannelPanel>
);

const Taskbar = () => (
  <TaskRow>
    <TaskButton aria-label="开始"><Svg size={20}><Fill d="M1 4l9-1.500V11H1zM11 2.300L23 1v10H11zM1 12h9v9l-9-1.500zM11 12h12v11l-12-1.700z" c="#000" /></Svg></TaskButton>
    <TaskButton aria-label="搜索"><Svg size={20}><circle cx="15" cy="8" r="6.500" stroke="#000" strokeWidth="1.400" /><Line d="M11 13L2 23" c="#000" w={1.6} /></Svg></TaskButton>
    {taskApps.map(([name, art, state]) => (
      <TaskButton key={name} aria-label={name} $state={state}>
        <Svg size={30} box={32}>{art}</Svg>
      </TaskButton>
    ))}
    <Tray>
      <Svg size={18}><Line d="M2 17L12 7l10 10" c="#000" w={1.6} /></Svg>
      <Svg size={20}><Line d="M1 8h4l6-5v18l-6-5H1z" c="#000" w={1.4} /><Line d="M14 8c2 2 2 6 0 8M17 5c4 4 4 10 0 14" c="#000" w={1.4} /><Line d="M20 2c6 6 6 14 0 20" c="#aaa" w={1.4} /></Svg>
      <Svg size={20}><Line d="M4 7h19v11H4" c="#000" w={1.5} /><Fill d="M7 9h13v7H7z" c="#000" /><Line d="M1 6h5v4H1zM3 10v8" c="#000" w={1.5} /></Svg>
      <Svg size={20}><Line d="M4 22C4 12 12 4 22 4M8 22c0-8 6-14 14-14M12 22c0-6 4-10 10-10M16 22c0-3 2-6 6-6" c="#555" w={1.5} /><circle cx="20" cy="20" r="2" fill="#000" /></Svg>
      <Ime>英</Ime>
      <Clock>
        <span>20:46</span>
        <span>2023/3/8</span>
      </Clock>
      <Svg size={22}><Fill d="M1 1h22v18h-7l-5 5v-5H1z" c="#000" /><Line d="M5 6h14M5 10h14M5 14h9" c="#eee" w={1.5} /></Svg>
    </Tray>
    <Watermark>CSDN @you_are_my_sql</Watermark>
  </TaskRow>
);

/* ---------- styles ---------- */

const Global = createGlobalStyle`
  * {
    box-sizing: border-box;
  }
  body {
    margin: 0;
    overflow: hidden;
    background: #444;
  }
  body, button, input, select {
    font-family: "Noto Sans", "Noto Sans CJK SC", sans-serif;
    font-size: 12px;
    line-height: 16px;
    color: #c8c8c8;
  }
  button, input, select {
    border: 0;
    padding: 0;
    margin: 0;
    background: none;
    border-radius: 0;
  }
  svg {
    display: block;
    flex-shrink: 0;
  }
`;

const Shell = styled.div`
  display: flex;
  flex-direction: column;
  height: 100vh;
  background: #444;
  white-space: nowrap;
`;

const TitleBar = styled.header`
  display: flex;
  align-items: center;
  height: 29px;
  padding: 0 4px 0 2px;
  background: #fff;

  h1 {
    flex: 1;
    margin: 0 0 2px 5px;
    font-size: 16px;
    line-height: 20px;
    font-weight: 400;
    color: #000;
  }
`;

const WindowButton = styled.button`
  display: grid;
  place-items: center;
  width: 58px;
  height: 29px;
`;

const TopMenuRow = styled.div`
  display: flex;
  justify-content: space-between;
  height: 24px;
`;

const MenuBar = styled.nav`
  display: flex;
  align-items: center;
  gap: 15px;
  flex-shrink: 0;
  height: ${({ $h = 24 }) => $h}px;
  padding-left: ${({ $left = 9 }) => $left}px;
`;

const Workspace = styled.div`
  display: flex;
  align-items: center;
  padding: 1px 2px 0 0;

  label {
    margin-right: 8px;
  }

  ${() => ToolButton} {
    margin-left: 3px;
  }
`;

const PickerBox = styled.div`
  position: relative;
  width: ${({ $grow }) => $grow}px;
  height: 21px;

  select {
    appearance: none;
    width: 100%;
    height: 100%;
    padding: 0 20px 0 3px;
    background: #5d5d5d;
    border-radius: 2px;
  }
`;

const PickerArrow = styled.span`
  position: absolute;
  top: 0;
  right: 0;
  width: 20px;
  height: 100%;
  border-left: 1px solid #4a4a4a;
  pointer-events: none;

  &::after {
    content: "";
    position: absolute;
    left: 5px;
    top: calc(50% - 2px);
    border: 5px solid transparent;
    border-top-color: ${LIGHT};
    border-bottom: 0;
  }
`;

const StatusLine = styled.div`
  display: flex;
  align-items: center;
  height: 36px;
  padding: 0 2px 1px 3px;
  border-bottom: 2px solid ${DARK};
`;

const Grip = styled.span`
  flex-shrink: 0;
  width: 5px;
  height: 26px;
  margin-right: 6px;
  background: conic-gradient(at 1px 1px, transparent 270deg, #858585 0);
  background-size: 3px 3px;

  ${({ $flat }) =>
    $flat &&
    css`
      width: 38px;
      height: 5px;
      margin: 3px 0;
    `}
  ${({ $thin }) =>
    $thin &&
    css`
      width: 2px;
      height: 8px;
      margin: 0 3px;
    `}
`;

const Sep = styled.span`
  position: relative;
  flex-shrink: 0;
  width: ${({ $w = 22 }) => $w}px;
  height: ${({ $w = 22 }) => ($w === 11 ? 16 : 20)}px;
  background:
    linear-gradient(#8a8a8a, #8a8a8a) center / 3px 60% no-repeat,
    linear-gradient(#8a8a8a, #8a8a8a) center / 1px 100% no-repeat;
`;

const DropArrow = styled.span`
  flex-shrink: 0;
  width: ${({ $w }) => $w}px;
  display: grid;
  place-items: center;

  &::after {
    content: "";
    border: 3px solid transparent;
    border-top: 4px solid #999;
    border-bottom: 0;
  }
`;

const ToolButton = styled.button`
  display: grid;
  place-items: center;
  flex-shrink: 0;
  width: 22px;
  height: 22px;
  margin-right: 1px;
  background: ${({ $on }) => ($on ? "#5285a6" : "none")};
`;

const StatusField = styled.input`
  width: ${({ $w }) => $w}px;
  height: 22px;
  padding-left: 5px;
  border: 1px solid #505050;
  border-radius: 3px;
  background: #404040;
`;

const StatusRight = styled.div`
  display: flex;
  align-items: center;
  margin-left: auto;
`;

const Coord = styled.label`
  display: flex;
  align-items: center;
  gap: 2px;
  width: 52px;
  padding-left: 2px;

  &:first-of-type {
    margin-left: 4px;
  }

  input {
    width: 38px;
    height: 20px;
    margin-left: auto;
    border-radius: 2px;
    background: #2b2b2b;
  }
`;

const LoginButton = styled.button`
  display: flex;
  align-items: center;
  gap: 3px;
  width: 116px;
  height: 27px;
  padding-left: 2px;
  background: #5d5d5d;
  color: #fff;
  font-size: 15px;
  line-height: 20px;
`;

const Shelf = styled.section`
  display: flex;
  align-items: stretch;
  height: 72px;
  padding: 3px 3px 0;
  border-bottom: 2px solid ${DARK};

  > span {
    height: 64px;
  }
`;

const ShelfSide = styled.div`
  display: flex;
  flex-direction: column;
  align-items: center;
  justify-content: space-between;
  width: 20px;
  height: 65px;
  margin-right: 3px;
  padding: 8px 0 9px;
  background: ${DARK};
`;

const ShelfBody = styled.div`
  flex: 1;
  min-width: 0;
`;

const TabStrip = styled.div`
  display: flex;
  align-items: flex-end;
  gap: 2px;
  height: 20px;
  padding-left: ${({ $inset }) => ($inset ? 2 : 1)}px;
  background: ${DARK};
`;

const Tab = styled.button`
  height: 18px;
  padding: 0 14px;
  border-radius: 3px 3px 0 0;
  background: #3a3a3a;
  box-shadow: inset 1px 1px 0 #2e2e2e, inset -1px 0 0 #2e2e2e;
  color: #8e8e8e;

  ${({ $on }) =>
    $on &&
    css`
      background: #444;
      box-shadow: none;
      color: #fff;
    `}
`;

const ShelfIcons = styled.div`
  display: flex;
  align-items: center;
  height: 42px;
  padding-left: 4px;
`;

const ShelfButton = styled.button`
  display: grid;
  place-items: center;
  flex-shrink: 0;
  width: 35px;
  height: 35px;
`;

const ShelfRule = styled.span`
  width: 2px;
  height: 35px;
  margin: 0 5px;
  background: #9a9a9a;
`;

const ShelfScroll = styled.div`
  display: flex;
  flex-direction: column;
  align-items: center;
  justify-content: space-between;
  width: 12px;
  height: 35px;
  margin: 0 5px 0 auto;
  padding: 4px 0;
  background: ${DARK};

  i {
    width: 10px;
    height: 10px;
    border-radius: 5px;
    background: #5d5d5d;
  }
`;

const arrowSides = {
  up: css`border-top: 0; border-bottom-color: currentColor;`,
  down: css`border-bottom: 0; border-top-color: currentColor;`,
  left: css`border-left: 0; border-right-color: currentColor;`,
  right: css`border-right: 0; border-left-color: currentColor;`,
};

const Triangle = styled.span`
  flex-shrink: 0;
  width: 0;
  height: 0;
  color: #c0c0c0;
  border: ${({ $big }) => ($big ? 6 : 5)}px solid transparent;
  ${({ $dir }) => arrowSides[$dir]}
`;

const Main = styled.main`
  display: flex;
  flex: 1;
  min-height: 0;
  border-bottom: 2px solid ${DARK};
`;

const ToolColumn = styled.aside`
  display: flex;
  flex-direction: column;
  align-items: center;
  gap: 1px;
  width: 46px;
  border-right: 2px solid ${DARK};
`;

const BigTool = styled.button`
  display: grid;
  place-items: center;
  flex-shrink: 0;
  width: 36px;
  height: 36px;
  border-radius: 1px;
  background: ${({ $on }) => ($on ? "#5285a6" : "none")};
`;

const ToolRule = styled.hr`
  width: 36px;
  height: 2px;
  margin: 78px 0 4px;
  border: 0;
  background: #9a9a9a;
`;

const MayaMark = styled.div`
  margin: auto 0 7px;
`;

const OutlinerPanel = styled.section`
  display: flex;
  flex-direction: column;
  width: 266px;
  border-right: 2px solid ${DARK};
`;

const SearchRow = styled.div`
  display: flex;
  align-items: center;
  gap: 7px;
  margin: 3px 5px 0 4px;
  padding-left: 2px;
`;

const SearchBox = styled.div`
  display: flex;
  align-items: center;
  flex: 1;
  height: 22px;
  padding: 0 6px 0 3px;
  border-radius: 2px;
  background: #2b2b2b;

  input {
    flex: 1;
    min-width: 0;
  }

  input::placeholder {
    color: #858585;
  }
`;

const TreeArea = styled.div`
  display: flex;
  flex: 1;
  min-height: 0;
  margin: 0 4px;
  background: ${DARK};
`;

const Tree = styled.ul`
  flex: 1;
  margin: 0;
  padding: 0;
  list-style: none;
`;

const TreeRow = styled.li`
  display: flex;
  align-items: center;
  height: 20px;
  padding-left: 5px;
  color: ${({ $dim }) => ($dim ? "#6e6e6e" : "#c8c8c8")};

  svg + svg {
    margin: 0 3px 0 20px;
  }
`;

const VScroll = styled.div`
  display: flex;
  flex-direction: column;
  align-items: center;
  gap: 3px;
  width: 10px;
  padding: 4px 0;

  i {
    flex: 1;
    width: 10px;
    border-radius: 5px;
    background: #5d5d5d;
  }
`;

const HScroll = styled.div`
  display: flex;
  align-items: center;
  flex-shrink: 0;
  gap: 5px;
  height: 11px;
  margin: 0 4px;
  padding: 0 ${({ $right = 4 }) => $right}px 0 3px;
  background: ${DARK};

  b {
    flex: 1;
    padding-right: ${({ $end = 20 }) => $end - 20}px;
  }

  i {
    display: block;
    height: 10px;
    border-radius: 5px;
    background: #5d5d5d;
  }
`;

const Dots = styled.span`
  align-self: center;
  flex-shrink: 0;
  width: 86px;
  height: 10px;
  padding: 2px 0 7px;
  background: conic-gradient(at 1px 1px, transparent 270deg, #858585 0) 0 2px / 3px 3px;
  background-clip: content-box;
`;

const ViewportWrap = styled.section`
  flex: 1;
  min-width: 0;
  padding: 3px;
  border-right: 2px solid ${DARK};
`;

const ViewportFrame = styled.div`
  display: flex;
  flex-direction: column;
  height: 100%;
  border: 1px solid #8c8c8c;
`;

const ViewToolbar = styled.div`
  display: flex;
  align-items: center;
  flex-shrink: 0;
  height: 20px;

  > ${PickerBox} {
    height: 18px;
    margin-left: 3px;
  }
`;

const ViewGroup = styled.div`
  display: flex;
  align-items: center;
`;

const SmallTool = styled.button`
  display: grid;
  place-items: center;
  width: 18px;
  height: 18px;
  margin-right: 1px;
  background: ${({ $on }) => ($on ? "#5285a6" : "none")};
`;

const ViewNumber = styled.input`
  width: 38px;
  height: 15px;
  margin: 0 2px;
  padding-left: 5px;
  border-radius: 2px;
  background: #2b2b2b;
`;

const Stage = styled.div`
  position: relative;
  flex: 1;
  min-height: 0;
  background: #5c5c5c;
`;

const SceneSvg = styled.svg`
  width: 100%;
  height: 100%;
`;

const AxisMark = styled.div`
  position: absolute;
  left: 8px;
  bottom: 17px;

  text {
    font-family: "DejaVu Sans Mono", monospace;
  }
`;

const Center = styled.div`
  position: absolute;
  left: 50%;
  top: 50%;
  z-index: 5;
`;

const MarkingItem = styled.button`
  position: absolute;
  left: ${({ $x }) => $x}px;
  top: ${({ $y }) => $y}px;
  width: ${({ $w }) => $w}px;
  height: 21px;
  border: 1px solid #000;
  background: ${({ $on }) => ($on ? "#5285a6" : "#525252")};
  color: #eee;
`;

const MarkingStroke = styled.div`
  position: absolute;
  left: -58px;
  top: -90px;
`;

const ContextMenu = styled.ul`
  position: absolute;
  left: -113px;
  top: 49px;
  width: 133px;
  margin: 0;
  padding: 0;
  list-style: none;
  border: 1px solid #000;
  background: #525252;
`;

const ContextItem = styled.li`
  display: flex;
  align-items: center;
  height: 20px;
  padding: 0 5px 0 25px;

  button {
    flex: 1;
    text-align: left;
    color: #eee;
  }

  button:disabled {
    color: #808080;
  }

  input {
    appearance: none;
    width: 11px;
    height: 11px;
    border: 1px solid #c8c8c8;
  }

  ${Triangle} {
    margin-right: 4px;
    color: #fff;
    border-width: 4px 0 4px 4px;
  }
`;

const ContextRule = styled.li`
  height: 5px;
  background: linear-gradient(#747474, #747474) 0 1px / 100% 1px no-repeat;
`;

const ChannelPanel = styled.section`
  display: flex;
  flex-direction: column;
  width: 263px;
`;

const ChannelIcons = styled.div`
  display: flex;
  justify-content: flex-end;
  gap: 6px;
  padding: 4px 6px 2px;
`;

const ChannelList = styled.div`
  flex: 354;
  margin: 0 4px 0 5px;
  background: #2b2b2b;
`;

const LayerPanel = styled.div`
  display: flex;
  flex-direction: column;
  flex: 318;
  margin: 2px 3px 4px 4px;
`;

const LayerBody = styled.div`
  display: flex;
  flex-direction: column;
  flex: 1;
  border: 1px solid #303030;
  border-top: 0;
  padding-bottom: 3px;
`;

const LayerIcons = styled.div`
  display: flex;
  justify-content: flex-end;
  gap: 8px;
  padding: 4px 9px 6px;
`;

const LayerList = styled.div`
  flex: 1;
  margin: 0 4px 0 3px;
  background: #2b2b2b;
`;

const SideTabs = styled.aside`
  display: flex;
  flex-direction: column;
  gap: 2px;
  width: 20px;
  padding-top: 2px;
  background: ${DARK};

  button {
    writing-mode: vertical-rl;
    text-orientation: sideways;
    width: 19px;
    padding: 13px 0;
    border-radius: 0 3px 3px 0;
    background: #3a3a3a;
    box-shadow: inset 0 0 0 1px #2e2e2e;
    color: #8e8e8e;
  }

  button:first-child {
    background: #444;
    box-shadow: none;
    color: #fff;
  }
`;

const TimeRow = styled.div`
  display: flex;
  align-items: center;
  height: 40px;
  padding-left: 3px;
  border-bottom: 2px solid ${DARK};

  > ${Grip} {
    height: 32px;
    margin-right: 5px;
  }
`;

const TimeSlider = styled.div`
  position: relative;
  flex: 1;
  min-width: 0;
  margin-right: 7px;
  border-bottom: 3px solid ${DARK};
  background: #2b2b2b;
`;

const Ruler = styled.ol`
  display: flex;
  height: 27px;
  margin: 0;
  padding: 0 0 0 61px;
  list-style: none;

  li {
    flex: 1;
    min-width: 0;
    padding-left: 2px;
    line-height: 16px;
    color: #7c7c7c;
    background: linear-gradient(#999, #999) 0 17px / 2px 9px no-repeat;
  }

  li:last-child {
    flex: 0 0 21px;
    overflow: hidden;
  }
`;

const Playhead = styled.span`
  position: absolute;
  left: 9px;
  top: 0;
  bottom: -3px;
  width: 11px;
  padding-left: 2px;
  background: #5d5d5d;
  color: #fff;
  line-height: 30px;
`;

const NumberField = styled.input`
  flex-shrink: 0;
  width: 88px;
  height: 22px;
  padding-left: 6px;
  border-radius: 2px;
  background: #2b2b2b;
`;

const Playback = styled.div`
  display: flex;
  padding: 0 9px 3px 7px;
`;

const RangeRow = styled.div`
  display: flex;
  align-items: center;
  gap: 8px;
  height: 35px;
  padding-left: 3px;
  border-bottom: 2px solid ${DARK};

  > ${Grip} {
    margin-right: -2px;
  }
`;

const RangeTrack = styled.div`
  flex: 1;
  height: 23px;
  padding: 2px 0 2px 6px;
  background: ${DARK};
`;

const RangeBar = styled.div`
  display: flex;
  align-items: center;
  gap: 4px;
  width: 60%;
  height: 19px;
  padding: 0 4px;
  border-radius: 4px;
  background: #5d5d5d;

  span {
    margin-left: auto;
  }
`;

const Handle = styled.i`
  width: 13px;
  height: 12px;
  border-radius: 4px;
  background: #989898;
`;

const RangeTools = styled.div`
  display: flex;
  align-items: center;
  gap: 1px;
  width: 111px;
  margin-left: -8px;

  > ${ToolButton} {
    margin: 0 0 0 8px;
  }
`;

const CommandRow = styled.div`
  display: flex;
  align-items: center;
  height: 34px;
  padding: 0 7px 0 3px;
  border-bottom: 2px solid ${DARK};

  label {
    width: 45px;
    padding-left: 8px;
    color: #e0e0e0;
  }

  > ${ToolButton} {
    margin: 0 0 0 4px;
  }
`;

const CommandInput = styled.input`
  flex: 527;
  min-width: 0;
  height: 22px;
  border-radius: 2px;
  background: #2b2b2b;
`;

const CommandOutput = styled.input`
  flex: 1293;
  min-width: 0;
  height: 24px;
  background: #2b2b2b;
`;

const HelpRow = styled.footer`
  display: flex;
  align-items: center;
  height: 24px;
  padding-left: 3px;
  font-size: 11px;

  > ${Grip} {
    height: 20px;
    margin-right: 16px;
  }
`;

const TaskRow = styled.div`
  position: relative;
  display: flex;
  height: 50px;
  background: #eee;
`;

const TaskButton = styled.button`
  display: grid;
  place-items: center;
  flex-shrink: 0;
  width: 62px;
  height: 50px;
  ${({ $state }) =>
    $state &&
    css`
      background: linear-gradient(#4c4c4c, #4c4c4c) center bottom /
        ${$state === "active" ? 62 : 52}px 3px no-repeat
        ${$state === "active" ? "#f8f8f8" : "transparent"};
    `}

  &:first-child {
    width: 60px;
  }
`;

const Tray = styled.div`
  display: flex;
  align-items: center;
  gap: 11px;
  margin: 0 5px 0 auto;
  padding-right: 23px;
  border-right: 1px solid #bbb;
`;

const Ime = styled.span`
  font-size: 16px;
  line-height: 20px;
  color: #000;
`;

const Clock = styled.div`
  display: flex;
  flex-direction: column;
  align-items: center;
  width: 84px;
  margin-right: 8px;
  font-size: 15px;
  line-height: 22px;
  color: #000;
`;

const Watermark = styled.span`
  position: absolute;
  right: 14px;
  bottom: 9px;
  font-family: "Liberation Sans", sans-serif;
  font-size: 18px;
  line-height: 22px;
  color: rgba(225, 225, 225, 0.6);
  text-shadow: 1px 1px 1px rgba(90, 90, 90, 0.8);
  pointer-events: none;
`;
